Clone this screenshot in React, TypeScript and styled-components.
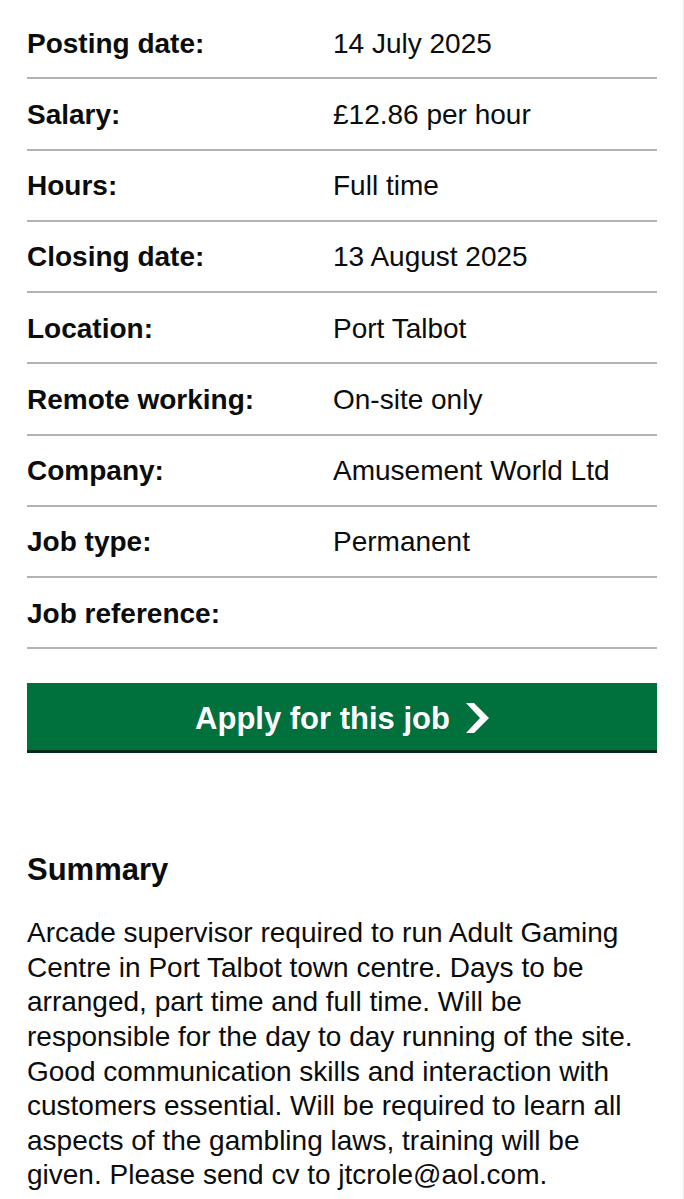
import React from 'react';
import styled, { createGlobalStyle } from 'styled-components';

type Detail = {
  label: string;
  value: string;
};

const details: Detail[] = [
  { label: 'Posting date:', value: '14 July 2025' },
  { label: 'Salary:', value: '£12.86 per hour' },
  { label: 'Hours:', value: 'Full time' },
  { label: 'Closing date:', value: '13 August 2025' },
  { label: 'Location:', value: 'Port Talbot' },
  { label: 'Remote working:', value: 'On-site only' },
  { label: 'Company:', value: 'Amusement World Ltd' },
  { label: 'Job type:', value: 'Permanent' },
  { label: 'Job reference:', value: '' },
];

const GlobalStyle = createGlobalStyle`
  html, body {
    margin: 0;
    padding: 0;
    background: #fff;
  }
  body {
    font-family: "Liberation Sans", Arial, Helvetica, sans-serif;
    color: #0b0c0c;
  }
`;

const Page = styled.main`
  width: 684px;
  min-height: 1199px;
  box-sizing: border-box;
  padding: 8px 26px 0 27px;
  border-right: 1px solid #ebebeb;
`;

const DetailList = styled.dl`
  margin: 0;
`;

const DetailRow = styled.div`
  display: grid;
  grid-template-columns: 306px 1fr;
  align-items: center;
  box-sizing: border-box;
  height: 71.25px;
  padding-top: 2px;
  border-bottom: 2px solid #b1b4b6;
  font-size: 28px;
  line-height: 34px;
`;

const Label = styled.dt`
  margin: 0;
  font-weight: 700;
`;

const Value = styled.dd`
  margin: 0;
`;

const ApplyButton = styled.a`
  display: flex;
  align-items: center;
  justify-content: center;
  gap: 14px;
  margin-top: 34px;
  height: 67px;
  box-sizing: border-box;
  padding-top: 4px;
  background: #00703c;
  box-shadow: 0 3px 0 #002d18;
  color: #fff;
  font-size: 31px;
  font-weight: 700;
  text-decoration: none;
  cursor: pointer;
`;

const Chevron = styled.svg`
  width: 25px;
  height: 30px;
  margin-top: -2px;
`;

const Summary = styled.section`
  margin-top: 101px;
`;

const Heading = styled.h2`
  margin: 0 0 27px;
  font-size: 31px;
  line-height: 38px;
  font-weight: 700;
`;

const Body = styled.p`
  margin: 0;
  font-size: 28px;
  line-height: 34.6px;
`;

export default function App() {
  return (
    <>
      <GlobalStyle />
      <Page>
        <DetailList>
          {details.map((d) => (
            <DetailRow key={d.label}>
              <Label>{d.label}</Label>
              <Value>{d.value}</Value>
            </DetailRow>
          ))}
        </DetailList>
        <ApplyButton href="#">
          Apply for this job
          <Chevron viewBox="0 0 25 30" aria-hidden="true">
            <path d="M2 0 H10 L25 15 L10 30 H2 L16 15 Z" fill="#fff" />
          </Chevron>
        </ApplyButton>
        <Summary>
          <Heading>Summary</Heading>
          <Body>
            Arcade supervisor required to run Adult Gaming Centre in Port
            Talbot town centre. Days to be arranged, part time and full time.
            Will be responsible for the day to day running of the site. Good
            communication skills and interaction with customers essential.
            Will be required to learn all aspects of the gambling laws,
            training will be given. Please send cv to jtcrole@aol.com.
          </Body>
        </Summary>
      </Page>
    </>
  );
}
